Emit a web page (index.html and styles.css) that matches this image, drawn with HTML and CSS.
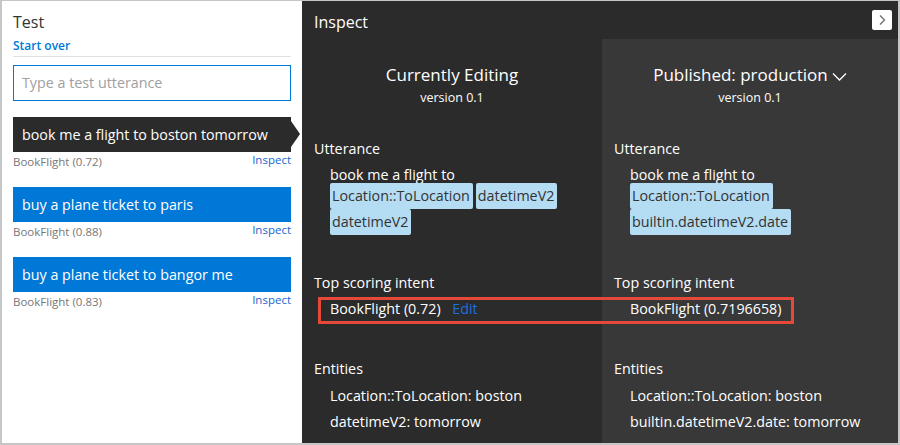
FILE: index.html
```html
<!DOCTYPE html>
<html>
<head>
<meta charset="utf-8">
<link rel="stylesheet" href="styles.css">
</head>
<body>
<div class="frame">
  <aside class="test">
    <h1 class="test-title">Test</h1>
    <a class="start-over">Start over</a>
    <div class="sep"></div>
    <div class="input">Type a test utterance</div>
    <ul class="utterances">
      <li class="utt">
        <div class="utt-text selected">book me a flight to boston tomorrow</div>
        <div class="utt-meta"><span>BookFlight (0.72)</span><a>Inspect</a></div>
      </li>
      <li class="utt">
        <div class="utt-text">buy a plane ticket to paris</div>
        <div class="utt-meta"><span>BookFlight (0.88)</span><a>Inspect</a></div>
      </li>
      <li class="utt">
        <div class="utt-text">buy a plane ticket to bangor me</div>
        <div class="utt-meta"><span>BookFlight (0.83)</span><a>Inspect</a></div>
      </li>
    </ul>
  </aside>
  <section class="inspect">
    <header class="inspect-head">
      <h2 class="inspect-title">Inspect</h2>
      <button class="close"><svg width="10" height="12" viewBox="0 0 10 12"><path d="M3 1.5 L7.5 6 L3 10.5" fill="none" stroke="#6d6d6d" stroke-width="1.3"/></svg></button>
    </header>
    <div class="cols">
      <div class="col">
        <div class="col-head">
          <div class="col-title">Currently Editing</div>
          <div class="col-ver">version 0.1</div>
        </div>
        <div class="label">Utterance</div>
        <div class="utter">
          <div class="utter-line">book me a flight to</div>
          <div class="chips"><span class="chip">Location::ToLocation</span><span class="chip">datetimeV2</span><span class="chip">datetimeV2</span></div>
        </div>
        <div class="label tsi">Top scoring intent</div>
        <div class="intent">BookFlight (0.72) <a class="edit">Edit</a></div>
        <div class="label ent">Entities</div>
        <div class="entity">Location::ToLocation: boston</div>
        <div class="entity">datetimeV2: tomorrow</div>
      </div>
      <div class="col pub">
        <div class="col-head">
          <div class="col-title">Published: production <svg class="caret" width="15" height="9" viewBox="0 0 15 9"><path d="M1 1.5 L7.5 8 L14 1.5" fill="none" stroke="#fff" stroke-width="1.3"/></svg></div>
          <div class="col-ver">version 0.1</div>
        </div>
        <div class="label">Utterance</div>
        <div class="utter">
          <div class="utter-line">book me a flight to</div>
          <div class="chips stack"><span class="chip">Location::ToLocation</span><span class="chip">builtin.datetimeV2.date</span></div>
        </div>
        <div class="label tsi">Top scoring intent</div>
        <div class="intent">BookFlight (0.7196658)</div>
        <div class="label ent">Entities</div>
        <div class="entity">Location::ToLocation: boston</div>
        <div class="entity">builtin.datetimeV2.date: tomorrow</div>
      </div>
    </div>
    <div class="highlight"></div>
  </section>
</div>
</body>
</html>
```
FILE: styles.css
```css
* { box-sizing: border-box; }
html, body { margin: 0; padding: 0; background: #fff; }
body { font-family: "Open Sans", "Noto Sans", sans-serif; }
.frame {
  width: 900px; height: 445px;
  display: flex;
  border-top: 1px solid #c6c6c6;
  border-left: 2px solid #c6c6c6;
  border-right: 2px solid #c6c6c6;
  border-bottom: 2px solid #c6c6c6;
  overflow: hidden;
}
.test {
  width: 300px; flex: none;
  background: #fff;
  padding: 0 11px;
  position: relative;
}
.test-title {
  margin: 10px 0 0; font-weight: 400; font-size: 16px; line-height: 22px; color: #333;
}
.start-over {
  display: block; color: #0078d7; font-size: 12px; font-weight: 600; line-height: 16px; margin-top: 5px;
}
.sep { height: 1px; background: #e1e1e1; margin-top: 2px; }
.input {
  margin-top: 8px; height: 36px; border: 1px solid #0078d7;
  padding: 0 8px; font-size: 14.3px; line-height: 34px; color: #a0a0a0;
}
.utterances { list-style: none; margin: 16px 0 0; padding: 0; }
.utt { margin-bottom: 15px; }
.utt-text {
  position: relative;
  height: 35px; background: #0078d7; color: #fff;
  padding: 0 9px; font-size: 14.3px; line-height: 35px;
}
.utt-text.selected { background: #2b2b2b; }
.utt-text.selected::after {
  content: ""; position: absolute; right: -9px; top: 4px;
  border-top: 13px solid transparent; border-bottom: 13px solid transparent;
  border-left: 9px solid #2b2b2b;
}
.utt-meta {
  display: flex; justify-content: space-between; align-items: flex-start;
  height: 20px; font-size: 11.5px; line-height: 18px; color: #777;
  padding-top: 1px;
}
.utt-meta a { color: #2266cc; margin-top: -2px; }
.inspect {
  flex: 1; background: #2b2b2b; color: #fff; position: relative;
  display: flex; flex-direction: column;
}
.inspect-head {
  height: 38px; flex: none; display: flex; justify-content: space-between; align-items: flex-start;
  padding: 0 6px 0 12px;
}
.inspect-title { margin: 10px 0 0; font-weight: 400; font-size: 16px; line-height: 22px; }
.close {
  margin-top: 9px; width: 20px; height: 20px; padding: 0; border: 0; border-radius: 2px;
  background: #fff; display: flex; align-items: center; justify-content: center;
}
.cols { flex: 1; display: grid; grid-template-columns: 300px 1fr; }
.col { padding: 0 12px; font-size: 14.3px; line-height: 24px; }
.pub { background: #383838; }
.col-head { text-align: center; padding-top: 23px; height: 99px; }
.col-title { font-size: 17px; line-height: 26px; display: inline-flex; align-items: center; gap: 4px; }
.col-ver { font-size: 12.5px; line-height: 18px; margin-top: 1px; }
.caret { margin-top: 2px; }
.label { line-height: 22px; }
.utter { padding-left: 16px; margin-top: 6px; }
.utter-line { line-height: 17px; }
.chips { display: flex; flex-wrap: wrap; gap: 0 3px; align-items: flex-start; height: 52px; }
.chips.stack { flex-direction: column; gap: 0; }
.chip {
  background: #b4dcf3; color: #333; padding: 0 3px 0 2px; border-radius: 2px;
  line-height: 26px; height: 26px;
}
.tsi { margin-top: 37px; }
.intent { padding-left: 16px; margin-top: 3px; }
.edit { color: #1e6fd9; margin-left: 8px; }
.ent { margin-top: 37px; }
.entity { padding-left: 16px; margin-top: 2px; }
.ent + .entity { margin-top: 4px; }
.highlight {
  position: absolute; left: 16px; top: 296px; width: 476px; height: 27px;
  border: 3px solid #e5493a; pointer-events: none;
}
```
